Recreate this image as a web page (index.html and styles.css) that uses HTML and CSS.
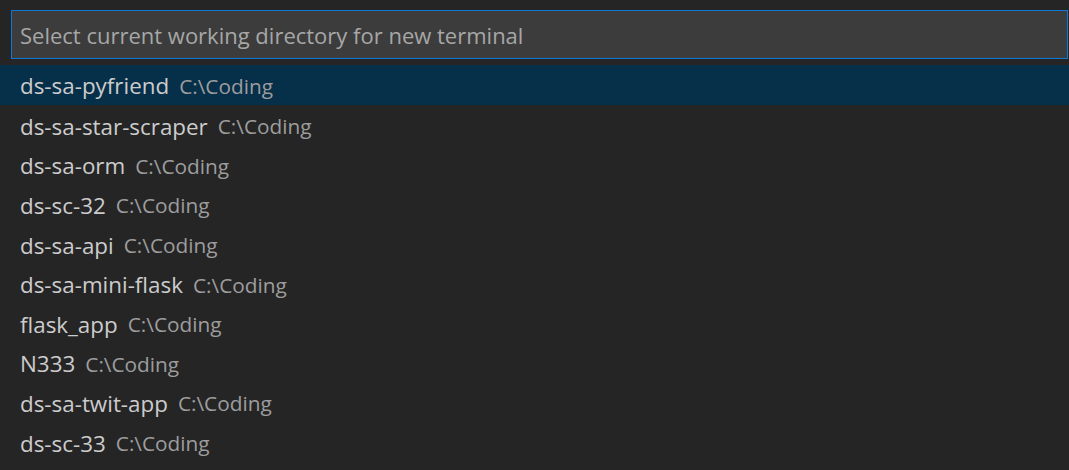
FILE: index.html
```html
<!DOCTYPE html>
<html>
<head>
<meta charset="utf-8">
<link rel="stylesheet" href="styles.css">
</head>
<body>
<div class="quick-pick">
  <div class="input-wrap">
    <div class="input">Select current working directory for new terminal</div>
  </div>
  <ul class="list">
    <li class="row selected"><span class="label">ds-sa-pyfriend</span><span class="desc">C:\Coding</span></li>
    <li class="row"><span class="label">ds-sa-star-scraper</span><span class="desc">C:\Coding</span></li>
    <li class="row"><span class="label">ds-sa-orm</span><span class="desc">C:\Coding</span></li>
    <li class="row"><span class="label">ds-sc-32</span><span class="desc">C:\Coding</span></li>
    <li class="row"><span class="label">ds-sa-api</span><span class="desc">C:\Coding</span></li>
    <li class="row"><span class="label">ds-sa-mini-flask</span><span class="desc">C:\Coding</span></li>
    <li class="row"><span class="label">flask_app</span><span class="desc">C:\Coding</span></li>
    <li class="row"><span class="label">N333</span><span class="desc">C:\Coding</span></li>
    <li class="row"><span class="label">ds-sa-twit-app</span><span class="desc">C:\Coding</span></li>
    <li class="row"><span class="label">ds-sc-33</span><span class="desc">C:\Coding</span></li>
  </ul>
</div>
</body>
</html>
```
FILE: styles.css
```css
html, body {
  margin: 0;
  padding: 0;
  background: #252526;
  height: 100%;
  overflow: hidden;
}
.quick-pick {
  font-family: "Open Sans", "Noto Sans", sans-serif;
  font-size: 22px;
  color: #cccccc;
}
.input-wrap {
  padding: 10px 1px 6px 11px;
}
.input {
  box-sizing: border-box;
  height: 49px;
  border: 1px solid #0e7ad3;
  background: #3c3c3c;
  color: #a7a7a7;
  padding: 0 8px;
  display: flex;
  align-items: center;
}
.list {
  list-style: none;
  margin: 0;
  padding: 0;
}
.row {
  height: 39.6px;
  display: flex;
  align-items: center;
  padding-left: 20px;
  gap: 10px;
  white-space: nowrap;
  padding-top: 3px;
  box-sizing: border-box;
}
.row.selected {
  background: #062f4a;
  height: 40px;
  padding-top: 1px;
}
.label {
  color: #cccccc;
  font-size: 22.4px;
}
.desc {
  color: #9d9d9d;
  font-size: 20.8px;
}
```
